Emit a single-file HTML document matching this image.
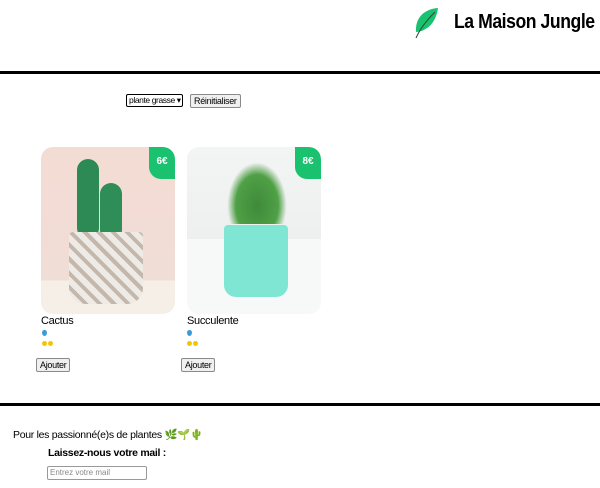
<!DOCTYPE html>
<html><head><meta charset="utf-8"><style>
*{margin:0;padding:0;box-sizing:border-box}
body{width:600px;height:488px;background:#fff;font-family:"Liberation Sans",sans-serif;position:relative;overflow:hidden;color:#000}
.abs{position:absolute;white-space:nowrap}
.line{position:absolute;left:0;width:600px;height:3px;background:#000}
.btn{position:absolute;font-size:9px;border:1px solid #8a8a8a;border-radius:2px;background:#f0f0f0;padding:1px 3px;letter-spacing:-0.3px;white-space:nowrap}
.img{position:absolute;width:134px;height:167px;border-radius:12px;overflow:hidden}
.price{position:absolute;right:0;top:0;width:26px;height:32px;background:#1ac26f;color:#fff;font-size:10px;font-weight:bold;text-align:center;line-height:30px;border-radius:0 12px 0 12px}
.name{position:absolute;font-size:11px;letter-spacing:-0.3px;white-space:nowrap}
.drop{position:absolute;width:5px;height:6px;background:#3a9bdc;border-radius:50% 50% 50% 50%/40% 40% 60% 60%}
.sun{position:absolute;width:5px;height:5px;background:#f6c400;border-radius:50%}
</style></head><body>
<svg class="abs" style="left:410px;top:6px" width="30" height="34" viewBox="0 0 30 34"><path d="M28 2 C14 3 5 12 6 26 C18 25 26 16 28 2Z" fill="#1ac26f"/><path d="M25 6 C16 15 10 23 6 32" stroke="#2a4a38" stroke-width="1" fill="none"/></svg>
<div class="abs" style="left:454px;top:11px;font-size:20px;font-weight:bold;letter-spacing:-0.5px;transform:scaleX(0.88);transform-origin:left">La Maison Jungle</div>
<div class="line" style="top:71px"></div>
<div class="abs" style="left:126px;top:94px;width:57px;height:13px;border:1px solid #000;border-radius:2px;font-size:8.5px;line-height:11px;padding-left:2px;letter-spacing:-0.4px;overflow:hidden">plante grasse ▾</div>
<div class="btn" style="left:190px;top:94px;height:14px;line-height:10px">Réinitialiser</div>

<div class="img" style="left:41px;top:147px;background:linear-gradient(#f3dcd4,#f0ddd6 80%,#f6efe8 80%)">
 <div class="abs" style="left:36px;top:12px;width:22px;height:80px;background:#2d8a55;border-radius:11px"></div>
 <div class="abs" style="left:59px;top:36px;width:22px;height:58px;background:#2f8d58;border-radius:11px"></div>
 <div class="abs" style="left:28px;top:85px;width:74px;height:72px;background:repeating-linear-gradient(45deg,#c4b8ad 0 4px,#eeeae6 4px 10px),#ddd;border-radius:4px 4px 16px 16px"></div>
 <div class="price">6€</div>
</div>
<div class="img" style="left:187px;top:147px;background:linear-gradient(#f3f4f4,#eef0f0 55%,#f7f8f8 55%)">
 <div class="abs" style="left:40px;top:15px;width:60px;height:62px;background:radial-gradient(ellipse at 50% 70%,#3f8a3a,#4fa046 50%,transparent 70%)"></div>
 <div class="abs" style="left:37px;top:78px;width:64px;height:72px;background:#7fe6d4;border-radius:4px 4px 12px 12px"></div>
 <div class="price">8€</div>
</div>

<div class="name" style="left:41px;top:315px">Cactus</div>
<div class="drop" style="left:42px;top:330px"></div>
<div class="sun" style="left:42px;top:341px"></div><div class="sun" style="left:48px;top:341px"></div>
<div class="btn" style="left:36px;top:358px;height:14px;line-height:10px">Ajouter</div>

<div class="name" style="left:187px;top:315px">Succulente</div>
<div class="drop" style="left:187px;top:330px"></div>
<div class="sun" style="left:187px;top:341px"></div><div class="sun" style="left:193px;top:341px"></div>
<div class="btn" style="left:181px;top:358px;height:14px;line-height:10px">Ajouter</div>

<div class="line" style="top:403px"></div>
<div class="abs" style="left:13px;top:428px;font-size:10.5px;letter-spacing:-0.3px">Pour les passionné(e)s de plantes <span style="color:#6cb33f">🌿🌱🌵</span></div>
<div class="abs" style="left:48px;top:447px;font-size:10.5px;font-weight:bold;letter-spacing:-0.3px">Laissez-nous votre mail :</div>
<div class="abs" style="left:47px;top:466px;width:100px;height:14px;border:1px solid #999;border-radius:2px;font-size:8px;color:#888;line-height:12px;padding-left:2px">Entrez votre mail</div>
</body></html>
